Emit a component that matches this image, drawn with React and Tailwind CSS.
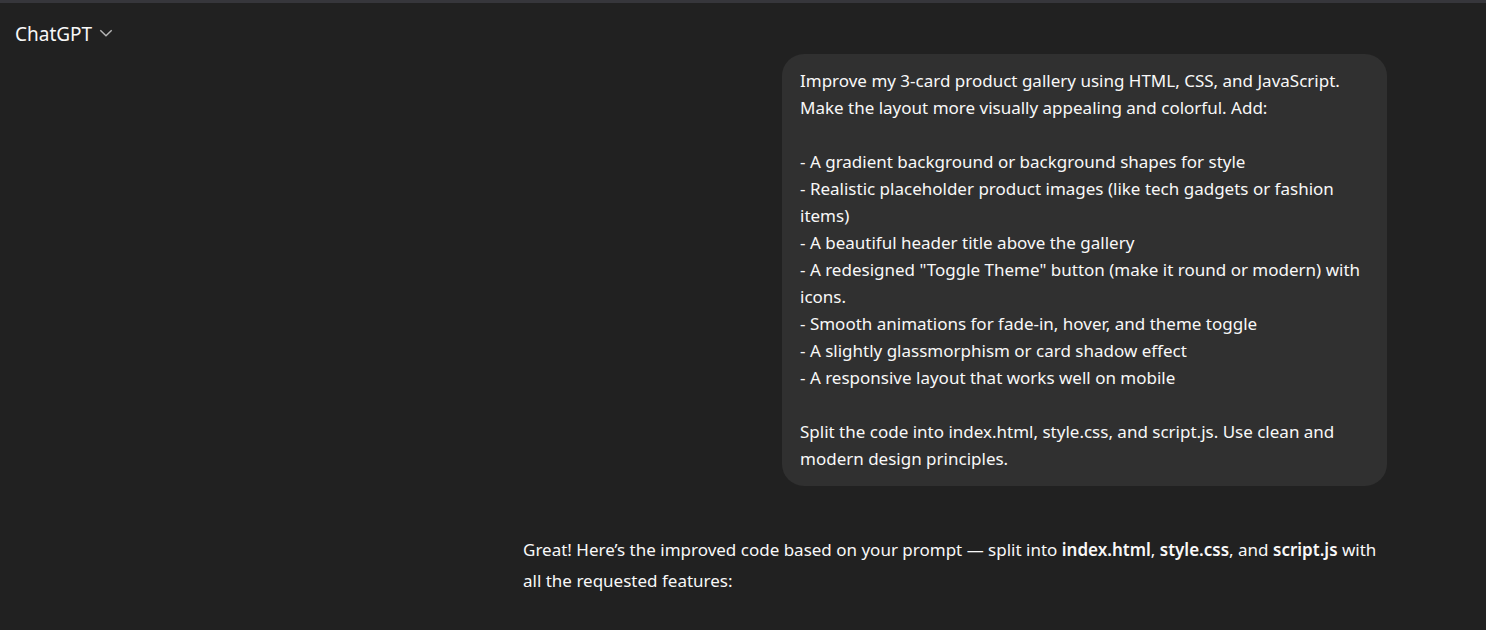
const prompt = `Improve my 3-card product gallery using HTML, CSS, and JavaScript. Make the layout more visually appealing and colorful. Add:

- A gradient background or background shapes for style
- Realistic placeholder product images (like tech gadgets or fashion items)
- A beautiful header title above the gallery
- A redesigned "Toggle Theme" button (make it round or modern) with icons.
- Smooth animations for fade-in, hover, and theme toggle
- A slightly glassmorphism or card shadow effect
- A responsive layout that works well on mobile

Split the code into index.html, style.css, and script.js. Use clean and modern design principles.`;

export default function App() {
  return (
    <div className="min-h-screen border-t-3 border-[#36363b] bg-[#212121] font-['Noto_Sans',sans-serif] text-[17px] text-[#f8f8f8]">
      <header className="flex h-[51px] items-start px-[15px] pt-[17px]">
        <button type="button" className="flex items-center gap-[7px] text-[19px] leading-7">
          ChatGPT
          <svg width="14" height="10" viewBox="0 0 14 10" fill="none" stroke="#b4b4b4" strokeWidth="1.5" aria-hidden="true">
            <path d="M1.3 1.2L7 6.8l5.7-5.6" />
          </svg>
        </button>
      </header>
      <main className="ml-auto mr-[99px] flex max-w-[864px] flex-col">
        <p className="w-[605px] max-w-full self-end whitespace-pre-wrap rounded-[22px] bg-[#303030] px-[18px] pt-[13px] pb-[14px] leading-[27px]">
          {prompt}
        </p>
        <p className="mt-12 leading-[31px]">
          Great! Here’s the improved code based on your prompt — split into <strong className="font-semibold">index.html</strong>,{" "}
          <strong className="font-semibold">style.css</strong>, and <strong className="font-semibold">script.js</strong> with all the requested features:
        </p>
      </main>
    </div>
  );
}
